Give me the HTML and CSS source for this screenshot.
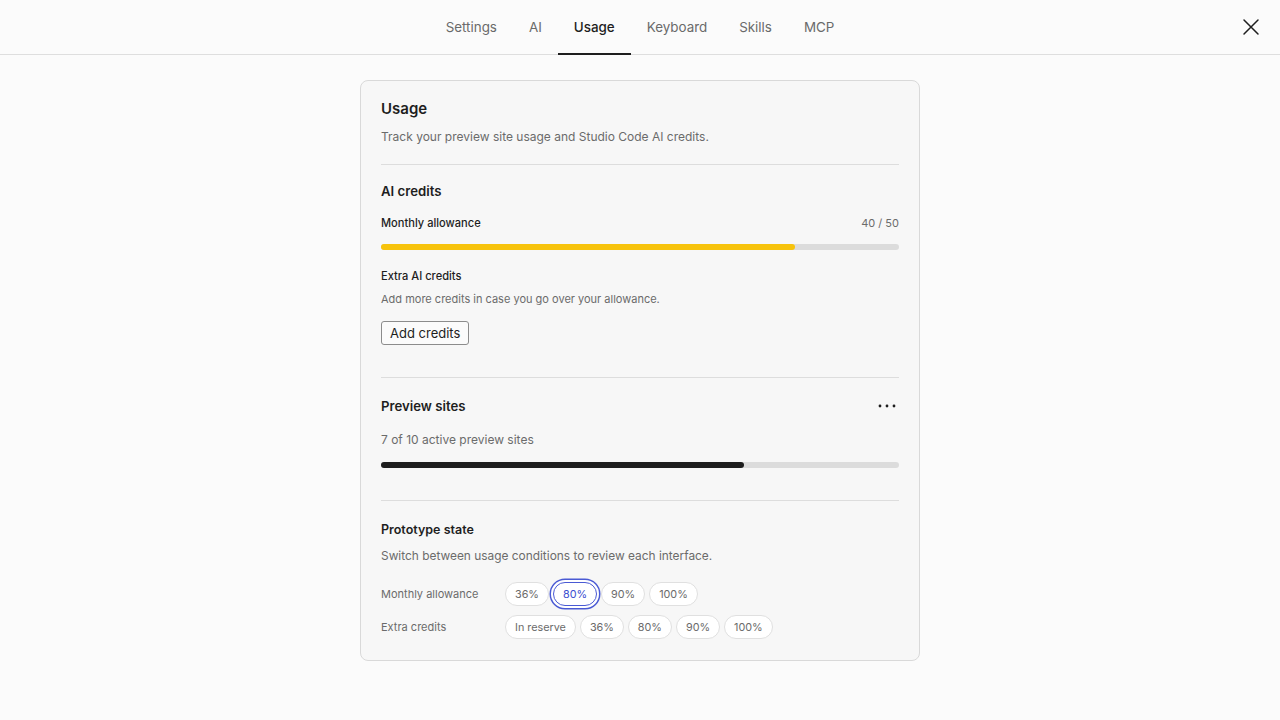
FILE: index.html
```html
<!DOCTYPE html>
<html lang="en">
  <head>
    <meta charset="UTF-8" />
    <meta name="viewport" content="width=device-width, initial-scale=1.0" />
    <title>Usage</title>
    <link rel="stylesheet" href="styles.css">
  </head>
  <body>
    <header class="topbar">
      <nav class="tabs">
        <a class="tab">Settings</a>
        <a class="tab">AI</a>
        <a class="tab active">Usage</a>
        <a class="tab">Keyboard</a>
        <a class="tab">Skills</a>
        <a class="tab">MCP</a>
      </nav>
      <button class="close" aria-label="Close">
        <svg width="18" height="18" viewBox="0 0 18 18"><path d="M2 2L16 16M16 2L2 16" stroke="#1e1e1e" stroke-width="1.5" stroke-linecap="round"/></svg>
      </button>
    </header>

    <main class="page">
      <div class="card">
        <section class="section intro">
          <h1>Usage</h1>
          <p class="sub">Track your preview site usage and Studio Code AI credits.</p>
        </section>

        <section class="section credits">
          <h2>AI credits</h2>
          <div class="meter-head">
            <span class="label">Monthly allowance</span>
            <span class="count">40 / 50</span>
          </div>
          <div class="track"><div class="fill yellow" style="width: 80%"></div></div>
          <div class="extra">
            <div class="label">Extra AI credits</div>
            <p class="hint">Add more credits in case you go over your allowance.</p>
            <button class="btn">Add credits</button>
          </div>
        </section>

        <section class="section sites">
          <div class="row-head">
            <h2>Preview sites</h2>
            <button class="more" aria-label="More">
              <svg width="18" height="4" viewBox="0 0 18 4"><circle cx="2" cy="2" r="1.4"/><circle cx="9" cy="2" r="1.4"/><circle cx="16" cy="2" r="1.4"/></svg>
            </button>
          </div>
          <p class="sites-count">7 of 10 active preview sites</p>
          <div class="track"><div class="fill dark" style="width: 70%"></div></div>
        </section>

        <section class="section proto">
          <h3>Prototype state</h3>
          <p class="sub small">Switch between usage conditions to review each interface.</p>
          <div class="option-row">
            <span class="opt-label">Monthly allowance</span>
            <div class="pills">
              <button class="pill">36%</button>
              <button class="pill selected">80%</button>
              <button class="pill">90%</button>
              <button class="pill">100%</button>
            </div>
          </div>
          <div class="option-row">
            <span class="opt-label">Extra credits</span>
            <div class="pills">
              <button class="pill">In reserve</button>
              <button class="pill">36%</button>
              <button class="pill">80%</button>
              <button class="pill">90%</button>
              <button class="pill">100%</button>
            </div>
          </div>
        </section>
      </div>
    </main>
  </body>
</html>
```

FILE: styles.css
```css
body {
  margin: 0;
  background-color: #fbfbfb;
  font-family: Inter, "Noto Sans", sans-serif;
  color: #1e1e1e;
}

button {
  font-family: inherit;
  cursor: pointer;
}

.topbar {
  position: relative;
  height: 54px;
  border-bottom: 1px solid #dedede;
  display: flex;
  justify-content: center;
}

.tabs {
  display: flex;
}

.tab {
  display: flex;
  align-items: center;
  padding: 0 16px;
  font-size: 13.4px;
  color: #6a6a6a;
  border-bottom: 2px solid transparent;
  margin-bottom: -1px;
}

.tab.active {
  color: #1e1e1e;
  font-weight: 500;
  border-bottom-color: #1e1e1e;
}

.close {
  position: absolute;
  right: 20px;
  top: 18px;
  border: none;
  background: none;
  padding: 0;
  width: 18px;
  height: 18px;
}

.page {
  display: flex;
  justify-content: center;
  padding-top: 25px;
}

.card {
  width: 518px;
  padding: 0 20px;
  background-color: #f7f7f7;
  border: 1px solid #d9d9d9;
  border-radius: 8px;
}

.section {
  border-top: 1px solid #dddddd;
}

.section:first-child {
  border-top: none;
}

h1 {
  margin: 0;
  font-size: 15px;
  line-height: 20px;
  font-weight: 600;
}

h2 {
  margin: 0;
  font-size: 13.2px;
  line-height: 18px;
  font-weight: 600;
}

h3 {
  margin: 0;
  font-size: 12.5px;
  line-height: 16px;
  font-weight: 600;
}

p {
  margin: 0;
}

.sub {
  font-size: 12px;
  line-height: 18px;
  color: #6b6b6b;
}

.intro {
  padding: 18px 0 18px;
}

.intro .sub {
  margin-top: 9px;
}

.credits {
  padding: 17px 0 32px;
}

.meter-head {
  display: flex;
  justify-content: space-between;
  margin-top: 15px;
  font-size: 11px;
  line-height: 16px;
}

.label {
  font-size: 11.1px;
  line-height: 16px;
  font-weight: 500;
}

.count {
  color: #6b6b6b;
}

.track {
  height: 6px;
  border-radius: 3px;
  background-color: #dcdcdc;
  margin-top: 13px;
}

.fill {
  height: 100%;
  border-radius: 3px;
}

.fill.yellow {
  background-color: #f7c30c;
}

.fill.dark {
  background-color: #1e1e1e;
}

.extra {
  margin-top: 18px;
}

.hint {
  margin-top: 7px;
  font-size: 11px;
  line-height: 16px;
  color: #6b6b6b;
}

.btn {
  margin-top: 14px;
  height: 24px;
  padding: 0 8px;
  font-size: 13px;
  color: #1e1e1e;
  background-color: #fbfbfb;
  border: 1px solid #8c8c8c;
  border-radius: 3px;
}

.sites {
  padding: 19px 0 32px;
}

.row-head {
  display: flex;
  justify-content: space-between;
  align-items: center;
}

.more {
  border: none;
  background: none;
  padding: 0;
  margin-right: 3px;
  display: flex;
  fill: #1e1e1e;
}

.sites-count {
  margin-top: 17px;
  font-size: 12px;
  line-height: 16px;
  color: #6b6b6b;
}

.sites .track {
  margin-top: 14px;
}

.proto {
  padding: 21px 0 21px;
}

.sub.small {
  margin-top: 10px;
  font-size: 11.9px;
  line-height: 16px;
}

.option-row {
  display: flex;
  align-items: center;
  margin-top: 9px;
}

.option-row:first-of-type {
  margin-top: 18px;
}

.opt-label {
  width: 124px;
  font-size: 11px;
  color: #6b6b6b;
}

.pills {
  display: flex;
  gap: 4px;
}

.pill {
  height: 24px;
  padding: 0 9px;
  font-size: 10.8px;
  color: #6b6b6b;
  background-color: #ffffff;
  border: 1px solid #e0e0e0;
  border-radius: 12px;
}

.pill.selected {
  color: #3b4ed0;
  border-color: #4a5ad4;
  box-shadow: 0 0 0 2px #ffffff, 0 0 0 3.5px #4a5ad4;
}
```
